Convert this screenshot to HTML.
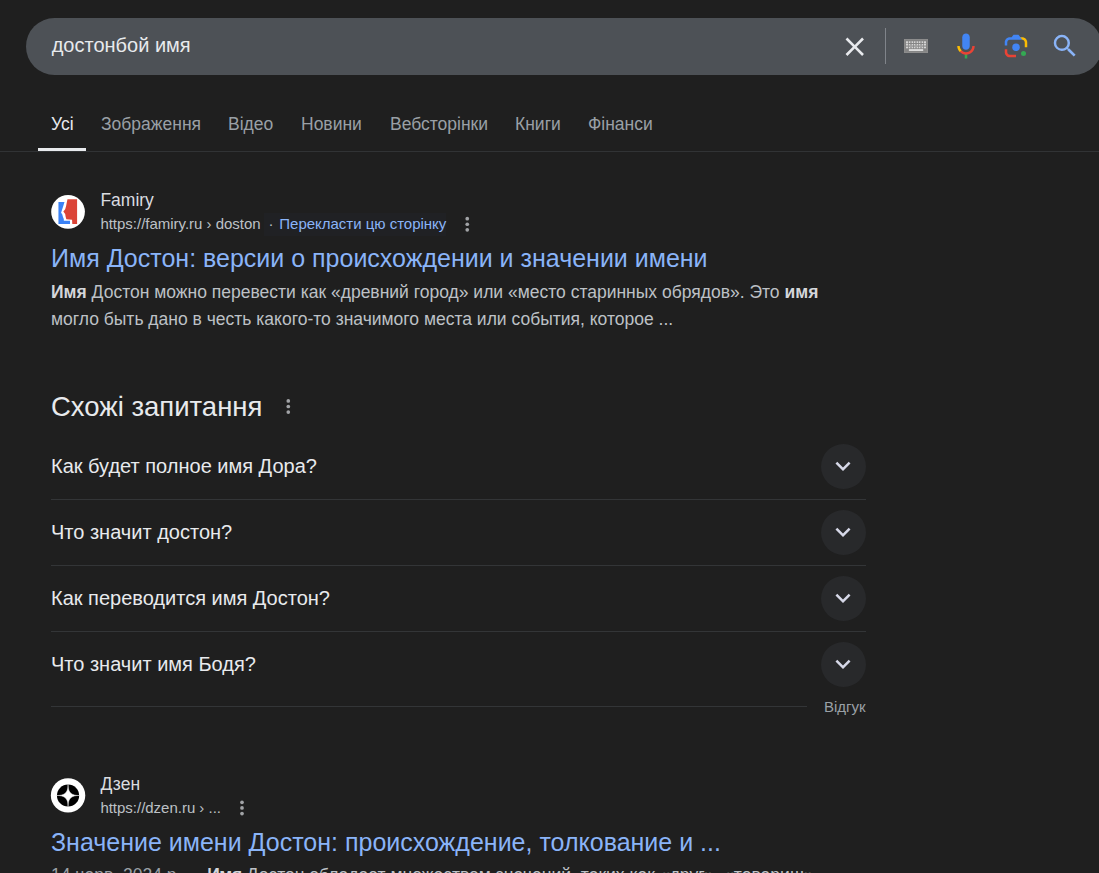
<!DOCTYPE html>
<html lang="uk">
<head>
<meta charset="utf-8">
<title>достонбой имя</title>
<style>
html,body{margin:0;padding:0;}
body{width:1099px;height:873px;overflow:hidden;background:#1f1f1f;position:relative;
 font-family:"Liberation Sans",sans-serif;color:#bdc1c6;}
.abs{position:absolute;white-space:nowrap;}
/* search bar */
#sb{left:26px;top:18px;width:1076px;height:57px;border-radius:29px;background:#4d5156;}
#q{left:51.7px;top:33px;font-size:20px;line-height:24px;color:#e8eaed;}
#vsep{left:885px;top:28px;width:1px;height:36px;background:#80848a;}
/* tabs */
.tab{top:113px;font-size:17.5px;line-height:22px;color:#9aa0a6;}
.tab.on{color:#e8eaed;}
#ul{left:38px;top:148px;width:48px;height:3px;background:#e8eaed;}
#hr{left:0;top:151px;width:1099px;height:1px;background:#313335;}
/* results */
.fav{width:35px;height:35px;border-radius:50%;background:#fff;overflow:hidden;}
.site{font-size:17.5px;line-height:22px;color:#dadce0;}
.cite{font-size:15px;line-height:18px;color:#bdc1c6;letter-spacing:-0.015px;}
.tr{color:#8ab4f8;}
.title{font-size:25px;line-height:30px;color:#8ab4f8;}
.snip{font-size:17.5px;line-height:27px;color:#bdc1c6;}
.snip b{color:#d4d6da;}
/* PAA */
#paah{left:51px;top:391px;font-size:27.5px;line-height:32px;color:#e8eaed;}
.qq{left:51px;font-size:20px;line-height:24px;color:#e8eaed;}
.ln{left:51px;height:1px;background:#333537;}
.circ{left:821px;width:45px;height:45px;border-radius:50%;background:#28292b;}
.circ svg{position:absolute;left:7px;top:7px;}
.dots{width:6px;height:16px;}
#trbg{left:263.5px;top:213px;width:182.3px;height:22.5px;background:#202124;}
#fb{left:824px;top:697.5px;font-size:15px;line-height:18px;color:#9aa0a6;}
</style>
</head>
<body>
<!-- search bar -->
<div class="abs" id="sb"></div>
<div class="abs" id="q">достонбой имя</div>
<svg class="abs" style="left:839.3px;top:30.9px" width="31.5" height="31.5" viewBox="0 0 24 24"><path fill="#e8eaed" d="M19 6.41L17.59 5 12 10.59 6.41 5 5 6.41 10.59 12 5 17.59 6.41 19 12 13.41 17.59 19 19 17.59 13.41 12z"/></svg>
<svg class="abs" style="left:904px;top:39px" width="24" height="14" viewBox="0 0 24 14"><rect x="0" y="0" width="24" height="14" fill="#858585"/><rect x="0.4" y="0.4" width="23.2" height="13.2" fill="none" stroke="#8e8e8e" stroke-width="0.8"/><g fill="#d4d4d4"><rect x="2" y="2.3" width="2" height="1.7"/><rect x="4.8" y="2.3" width="1.5" height="1.7"/><rect x="7.6" y="2.3" width="1.5" height="1.7"/><rect x="9.9" y="2.3" width="1.5" height="1.7"/><rect x="12.7" y="2.3" width="1.5" height="1.7"/><rect x="14.9" y="2.3" width="1.5" height="1.7"/><rect x="17.7" y="2.3" width="1.5" height="1.7"/><rect x="20" y="2.3" width="2" height="1.7"/><rect x="2" y="5" width="2" height="1.6"/><rect x="4.8" y="5" width="1.5" height="1.6"/><rect x="7.6" y="5" width="1.5" height="1.6"/><rect x="9.9" y="5" width="1.5" height="1.6"/><rect x="12.7" y="5" width="1.5" height="1.6"/><rect x="14.9" y="5" width="1.5" height="1.6"/><rect x="17.7" y="5" width="1.5" height="1.6"/><rect x="20" y="5" width="2" height="1.6"/><rect x="2" y="7.7" width="2" height="1.6"/><rect x="4.8" y="7.7" width="1.5" height="1.6"/><rect x="7.6" y="7.7" width="1.5" height="1.6"/><rect x="9.9" y="7.7" width="1.5" height="1.6"/><rect x="12.7" y="7.7" width="1.5" height="1.6"/><rect x="14.9" y="7.7" width="1.5" height="1.6"/><rect x="17.7" y="7.7" width="1.5" height="1.6"/><rect x="20" y="7.7" width="2" height="1.6"/></g><g fill="#a6a6a6"><rect x="2" y="4" width="2" height="1"/><rect x="2" y="6.6" width="2" height="1.1"/><rect x="20" y="4" width="2" height="1"/><rect x="20" y="6.6" width="2" height="1.1"/><rect x="6.3" y="2.3" width="1.3" height="1.7"/><rect x="11.4" y="2.3" width="1.3" height="1.7"/><rect x="16.4" y="2.3" width="1.3" height="1.7"/><rect x="4.8" y="6.6" width="4.3" height="1.1"/><rect x="9.9" y="6.6" width="4.3" height="1.1"/><rect x="14.9" y="6.6" width="4.3" height="1.1"/><rect x="6.3" y="5" width="1.3" height="4.3"/><rect x="11.4" y="5" width="1.3" height="4.3"/><rect x="16.4" y="5" width="1.3" height="4.3"/></g><rect x="4.9" y="10.1" width="14.3" height="1.9" fill="#dcdcdc"/></svg>
<svg class="abs" style="left:951px;top:31px" width="30" height="30" viewBox="0 0 24 24"><path fill="#4285f4" d="m12 15c1.66 0 3-1.31 3-2.97v-7.02c0-1.66-1.34-3.01-3-3.01s-3 1.34-3 3.01v7.02c0 1.66 1.34 2.97 3 2.97z"/><path fill="#34a853" d="m11 18.08h2v3.92h-2z"/><path fill="#fbbc04" d="m7.05 16.87c-1.27-1.33-2.05-2.83-2.05-4.87h2c0 1.45 0.56 2.42 1.47 3.38v0.32l-1.15 1.18z"/><path fill="#ea4335" d="m12 16.93a4.97 5.25 0 0 1 -3.54 -1.55l-1.41 1.49c1.26 1.34 3.02 2.13 4.95 2.13 3.87 0 6.99-2.92 6.99-7h-1.99c0 2.92-2.24 4.93-5 4.93z"/></svg>
<svg class="abs" style="left:1001px;top:31px" width="30" height="30" viewBox="0 0 192 192"><circle fill="#34a853" cx="144.07" cy="144" r="16"/><circle fill="#4285f4" cx="96.07" cy="104" r="24"/><path fill="#ea4335" d="M24,135.2c0,18.11,14.69,32.8,32.8,32.8H96v-16l-40.1-0.1c-8.8,0-15.9-8.19-15.9-17.9v-18H24V135.2z"/><path fill="#fbbc04" d="M168,72.8c0-18.11-14.69-32.8-32.8-32.8H116l20,16c8.8,0,16,8.29,16,18v30h16V72.8z"/><path fill="#4285f4" d="M112,24l-32,0L68,40H56.8C38.69,40,24,54.69,24,72.8V92h16V74c0-9.71,7.2-18,16-18h80L112,24z"/></svg>
<svg class="abs" style="left:1050px;top:31px" width="30" height="30" viewBox="0 0 24 24"><path fill="#8ab4f8" d="M15.5 14h-.79l-.28-.27A6.471 6.471 0 0 0 16 9.5 6.5 6.5 0 1 0 9.5 16c1.61 0 3.09-.59 4.23-1.57l.27.28v.79l5 4.99L20.49 19l-4.99-5zm-6 0C7.01 14 5 11.99 5 9.5S7.01 5 9.5 5 14 7.01 14 9.5 11.99 14 9.5 14z"/></svg>
<div class="abs" id="vsep"></div>

<!-- tabs -->
<div class="abs tab on" style="left:51px">Усі</div>
<div class="abs tab" style="left:101px">Зображення</div>
<div class="abs tab" style="left:228px">Відео</div>
<div class="abs tab" style="left:301px">Новини</div>
<div class="abs tab" style="left:390px">Вебсторінки</div>
<div class="abs tab" style="left:515px">Книги</div>
<div class="abs tab" style="left:588px">Фінанси</div>
<div class="abs" id="ul"></div>
<div class="abs" id="hr"></div>

<!-- result 1 -->
<svg class="abs" style="left:48px;top:191px" width="40" height="40" viewBox="0 0 873 873"><circle cx="437.5" cy="455" r="368" fill="#fff"/><path fill="#3b82f6" d="M228 240H360L330 340 300 430 285 475 310 510 325 560 345 610V648H480V720H228z"/><path fill="#db4437" d="M425 180H635V720H530L525 625 400 615 385 560 375 500 350 470 335 445 375 400 395 330 410 250z"/></svg>
<div class="abs" id="trbg"></div>
<div class="abs site" style="left:100.4px;top:189px">Famiry</div>
<div class="abs cite" style="left:100.4px;top:215px">https://famiry.ru › doston</div>
<div class="abs cite" style="left:268.4px;top:215px">·</div>
<div class="abs cite tr" style="left:279.3px;top:215px">Перекласти цю сторінку</div>
<svg class="abs" style="left:463px;top:214px" width="8" height="20" viewBox="0 0 8 20"><g fill="#a1a3a6"><circle cx="4.25" cy="4.65" r="1.85"/><circle cx="4.25" cy="10.25" r="1.85"/><circle cx="4.25" cy="15.85" r="1.85"/></g></svg>
<div class="abs title" style="left:51px;top:243px">Имя Достон: версии о происхождении и значении имени</div>
<div class="abs snip" style="left:51px;top:279px"><b>Имя</b> Достон можно перевести как «древний город» или «место старинных обрядов». Это <b>имя</b><br>могло быть дано в честь какого-то значимого места или события, которое ...</div>

<!-- PAA -->
<div class="abs" id="paah">Схожі запитання</div>
<svg class="abs" style="left:284px;top:396px" width="8" height="20" viewBox="0 0 8 20"><g fill="#a1a3a6"><circle cx="4.30" cy="4.90" r="1.85"/><circle cx="4.30" cy="10.50" r="1.85"/><circle cx="4.30" cy="16.10" r="1.85"/></g></svg>
<div class="abs qq" style="top:454px">Как будет полное имя Дора?</div>
<div class="abs qq" style="top:520px">Что значит достон?</div>
<div class="abs qq" style="top:586px">Как переводится имя Достон?</div>
<div class="abs qq" style="top:652px">Что значит имя Бодя?</div>
<div class="abs ln" style="top:499px;width:815px"></div>
<div class="abs ln" style="top:565px;width:815px"></div>
<div class="abs ln" style="top:631px;width:815px"></div>
<div class="abs ln" style="top:706px;width:756px"></div>
<div class="abs circ" style="top:444px"><svg width="30" height="30" viewBox="0 0 24 24"><path fill="#d6d8e8" d="M16.59 8.59L12 13.17 7.41 8.59 6 10l6 6 6-6z"/></svg></div>
<div class="abs circ" style="top:510px"><svg width="30" height="30" viewBox="0 0 24 24"><path fill="#d6d8e8" d="M16.59 8.59L12 13.17 7.41 8.59 6 10l6 6 6-6z"/></svg></div>
<div class="abs circ" style="top:576px"><svg width="30" height="30" viewBox="0 0 24 24"><path fill="#d6d8e8" d="M16.59 8.59L12 13.17 7.41 8.59 6 10l6 6 6-6z"/></svg></div>
<div class="abs circ" style="top:642px"><svg width="30" height="30" viewBox="0 0 24 24"><path fill="#d6d8e8" d="M16.59 8.59L12 13.17 7.41 8.59 6 10l6 6 6-6z"/></svg></div>
<div class="abs" id="fb">Відгук</div>

<!-- result 2 -->
<svg class="abs" style="left:48px;top:775px" width="40" height="40" viewBox="0 0 40 40"><circle cx="20.05" cy="20.4" r="17.2" fill="#fff"/><circle cx="20.05" cy="20.5" r="11.1" fill="#000"/><path fill="#fff" stroke="#fff" stroke-width="0.5" d="M20.05 9.40L20.05 9.50L20.05 9.80L20.06 10.28L20.09 10.92L20.14 11.70L20.24 12.57L20.39 13.51L20.63 14.48L20.96 15.44L21.39 16.36L21.94 17.20L22.59 17.96L23.35 18.61L24.19 19.16L25.11 19.59L26.07 19.92L27.04 20.16L27.98 20.31L28.85 20.41L29.63 20.46L30.27 20.49L30.75 20.50L31.05 20.50L31.15 20.50L31.05 20.50L30.75 20.50L30.27 20.51L29.63 20.54L28.85 20.59L27.98 20.69L27.04 20.84L26.07 21.08L25.11 21.41L24.19 21.84L23.35 22.39L22.59 23.04L21.94 23.80L21.39 24.64L20.96 25.56L20.63 26.52L20.39 27.49L20.24 28.43L20.14 29.30L20.09 30.08L20.06 30.72L20.05 31.20L20.05 31.50L20.05 31.60L20.05 31.50L20.05 31.20L20.04 30.72L20.01 30.08L19.96 29.30L19.86 28.43L19.71 27.49L19.47 26.52L19.14 25.56L18.71 24.64L18.16 23.80L17.51 23.04L16.75 22.39L15.91 21.84L14.99 21.41L14.03 21.08L13.06 20.84L12.12 20.69L11.25 20.59L10.47 20.54L9.83 20.51L9.35 20.50L9.05 20.50L8.95 20.50L9.05 20.50L9.35 20.50L9.83 20.49L10.47 20.46L11.25 20.41L12.12 20.31L13.06 20.16L14.03 19.92L14.99 19.59L15.91 19.16L16.75 18.61L17.51 17.96L18.16 17.20L18.71 16.36L19.14 15.44L19.47 14.48L19.71 13.51L19.86 12.57L19.96 11.70L20.01 10.92L20.04 10.28L20.05 9.80L20.05 9.50z"/></svg>
<div class="abs site" style="left:100.4px;top:773px">Дзен</div>
<div class="abs cite" style="left:100.4px;top:799px">https://dzen.ru › ...</div>
<svg class="abs" style="left:238px;top:797px" width="8" height="20" viewBox="0 0 8 20"><g fill="#a1a3a6"><circle cx="4.00" cy="5.35" r="1.85"/><circle cx="4.00" cy="10.95" r="1.85"/><circle cx="4.00" cy="16.55" r="1.85"/></g></svg>
<div class="abs title" style="left:51px;top:827px">Значение имени Достон: происхождение, толкование и ...</div>
<div class="abs snip" style="left:51px;top:862px;color:#9aa0a6">14 черв. 2024 р. — <b style="margin-left:-1.4px;letter-spacing:-0.4px">Имя</b> <span style="color:#bdc1c6;letter-spacing:0.02px">Достон обладает множеством значений, таких как «друг», «товарищ» ...</span></div>
</body>
</html>
